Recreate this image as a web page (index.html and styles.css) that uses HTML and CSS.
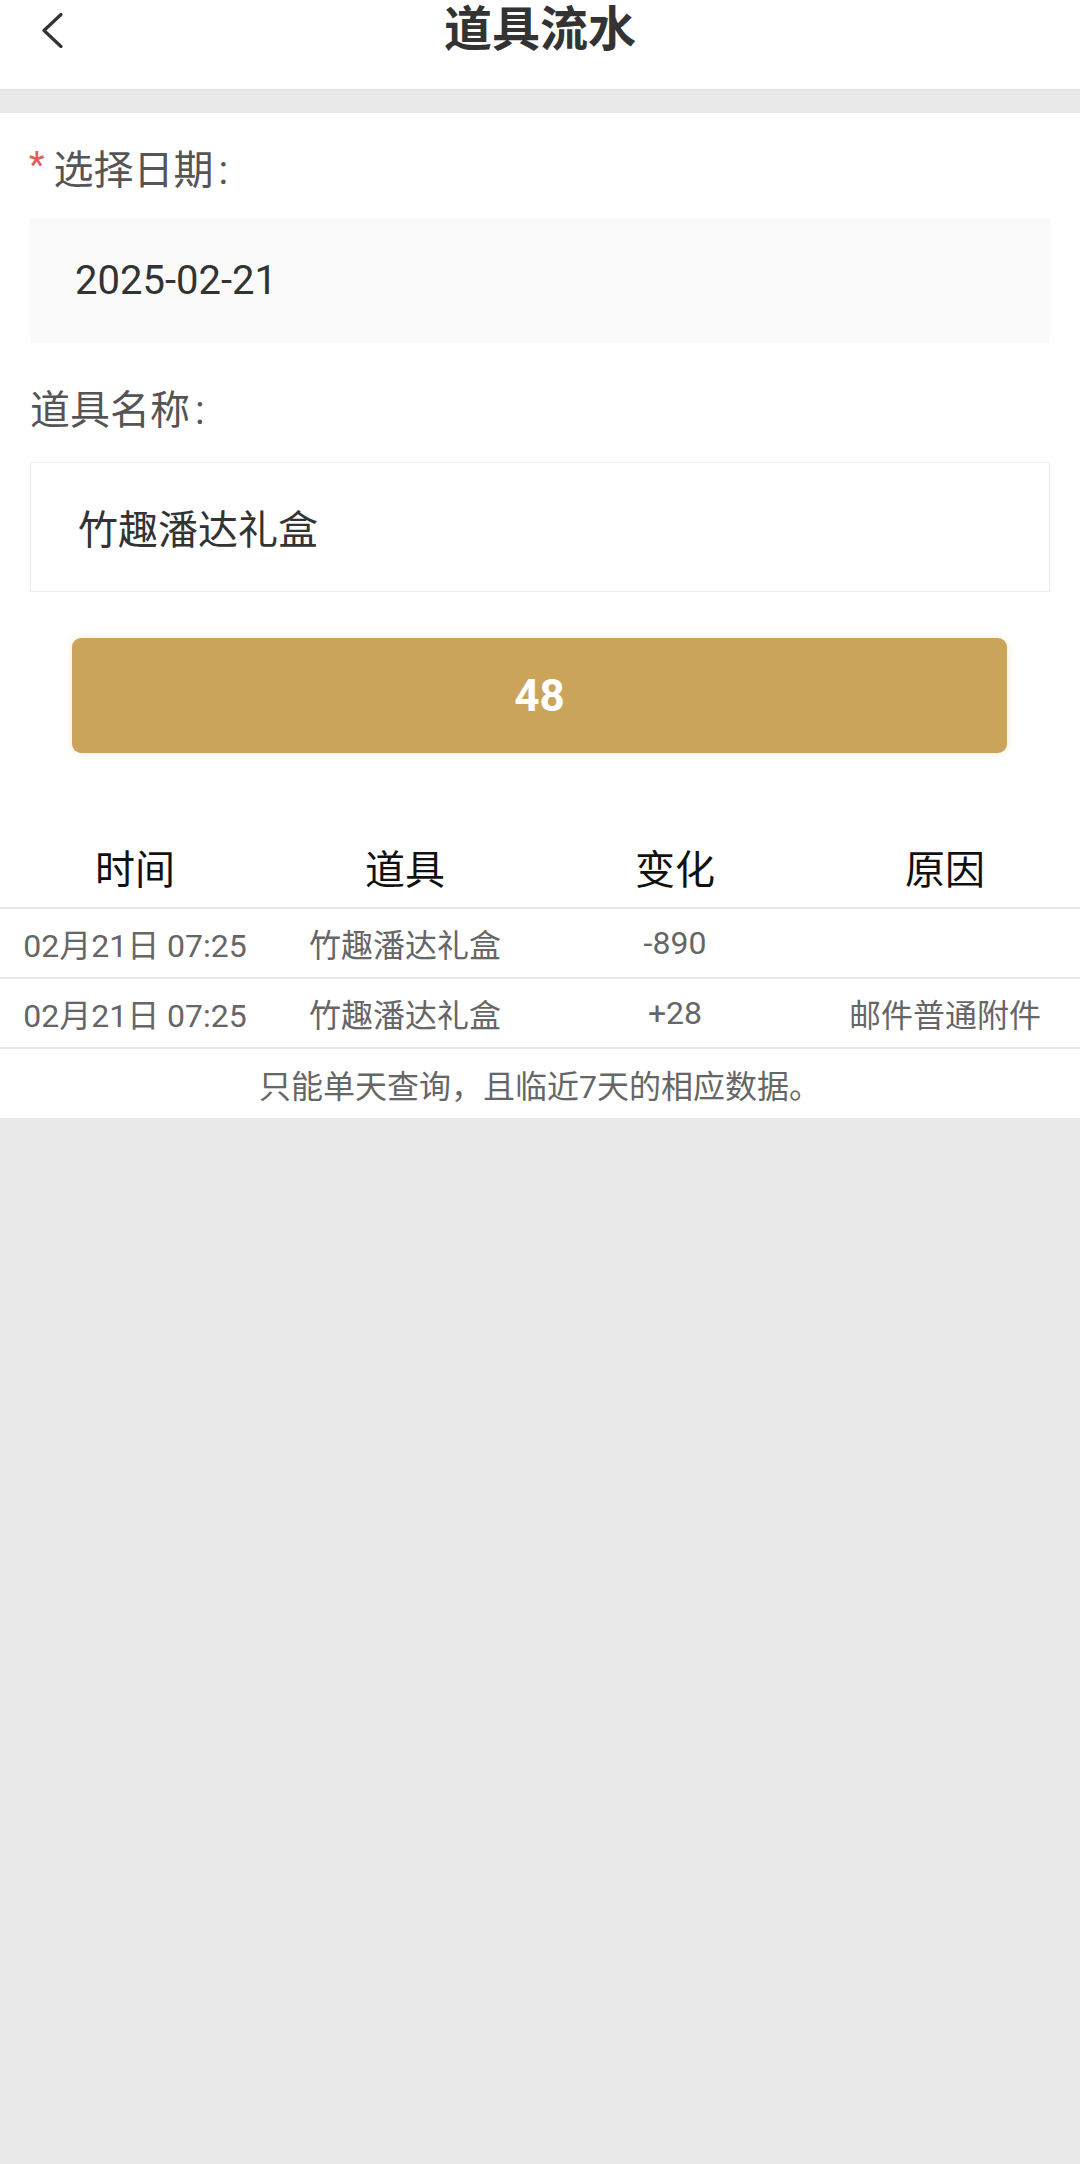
FILE: index.html
```html
<!DOCTYPE html>
<html lang="zh-CN">
<head>
<meta charset="utf-8">
<title>道具流水</title>
<link rel="stylesheet" href="styles.css">
</head>
<body>
<header class="topbar">
  <div class="back">
    <svg class="back-icon" width="24" height="36" viewBox="0 0 24 36" fill="none">
      <path d="M20 2.5 L3 18.5 L20 34.5" stroke="#333" stroke-width="3.2" stroke-linecap="round" stroke-linejoin="round"/>
    </svg>
  </div>
  <h1 class="title">道具流水</h1>
  <div></div>
</header>

<main class="panel">
  <section class="form">
    <div class="label"><span class="req">*</span>选择日期<span class="colon">:</span></div>
    <div class="field field-date">2025-02-21</div>
    <div class="label label-second">道具名称<span class="colon">:</span></div>
    <div class="field field-name">竹趣潘达礼盒</div>
    <button class="btn">48</button>
  </section>

  <section class="table">
    <div class="row head">
      <div>时间</div><div>道具</div><div>变化</div><div>原因</div>
    </div>
    <div class="row">
      <div>02月21日 07:25</div><div>竹趣潘达礼盒</div><div>-890</div><div></div>
    </div>
    <div class="row">
      <div>02月21日 07:25</div><div>竹趣潘达礼盒</div><div>+28</div><div>邮件普通附件</div>
    </div>
    <div class="note">只能单天查询，且临近7天的相应数据。</div>
  </section>
</main>
</body>
</html>
```
FILE: styles.css
```css
* { box-sizing: border-box; }

html, body {
  margin: 0;
  padding: 0;
}

body {
  width: 1080px;
  min-height: 2164px;
  background: #e9e9e9;
  font-family: Roboto, "Noto Sans CJK SC", sans-serif;
  color: #333;
}

.topbar {
  display: grid;
  grid-template-columns: 1fr auto 1fr;
  align-items: center;
  height: 90px;
  padding-bottom: 30px;
  background: #fff;
  margin-bottom: 23px;
  border-bottom: 1px solid #e2e2e2;
}

.back {
  display: flex;
  align-items: center;
  padding-left: 41px;
  height: 60px;
}

.back-icon { display: block; }

.title {
  margin: 0;
  font-size: 48px;
  line-height: 60px;
  font-weight: 700;
  color: #333;
}

.panel {
  background: #fff;
}

.form {
  padding: 30px 30px 0 30px;
  display: flex;
  flex-direction: column;
}

.label {
  font-size: 40px;
  line-height: 56px;
  color: #555;
  display: flex;
  align-items: center;
}

.colon {
  margin-left: 5px;
}

.req {
  color: #e25a5a;
  font-size: 36px;
  margin-left: -1px;
  margin-right: 9px;
  position: relative;
  top: -6px;
}

.label-second {
  margin-top: 40px;
}

.field {
  display: flex;
  align-items: center;
  padding-left: 45px;
  color: #333;
}

.field-date {
  margin-top: 19px;
  height: 125px;
  background: #fafafa;
  font-size: 40px;
}

.field-name {
  margin-top: 23px;
  height: 130px;
  background: #fff;
  border: 1px solid #ececec;
  font-size: 40px;
  padding-left: 47px;
}

.btn {
  margin: 46px 43px 0 42px;
  height: 115px;
  border: none;
  border-radius: 9px;
  background: #cba45c;
  color: #fff;
  font-family: Roboto, sans-serif;
  font-size: 44px;
  font-weight: 700;
  box-shadow: 0 0 8px rgba(230, 200, 130, 0.35);
}

.table {
  margin-top: 71px;
}

.row {
  display: grid;
  grid-template-columns: repeat(4, 1fr);
  align-items: center;
  text-align: center;
  height: 70px;
  border-bottom: 2px solid #e9e9e9;
  font-size: 32px;
  color: #666;
}

.row.head {
  height: 85px;
  font-size: 40px;
  color: #111;
  padding-top: 2px;
}

.note {
  height: 69px;
  display: flex;
  align-items: center;
  justify-content: center;
  font-size: 32px;
  color: #666;
}
```
